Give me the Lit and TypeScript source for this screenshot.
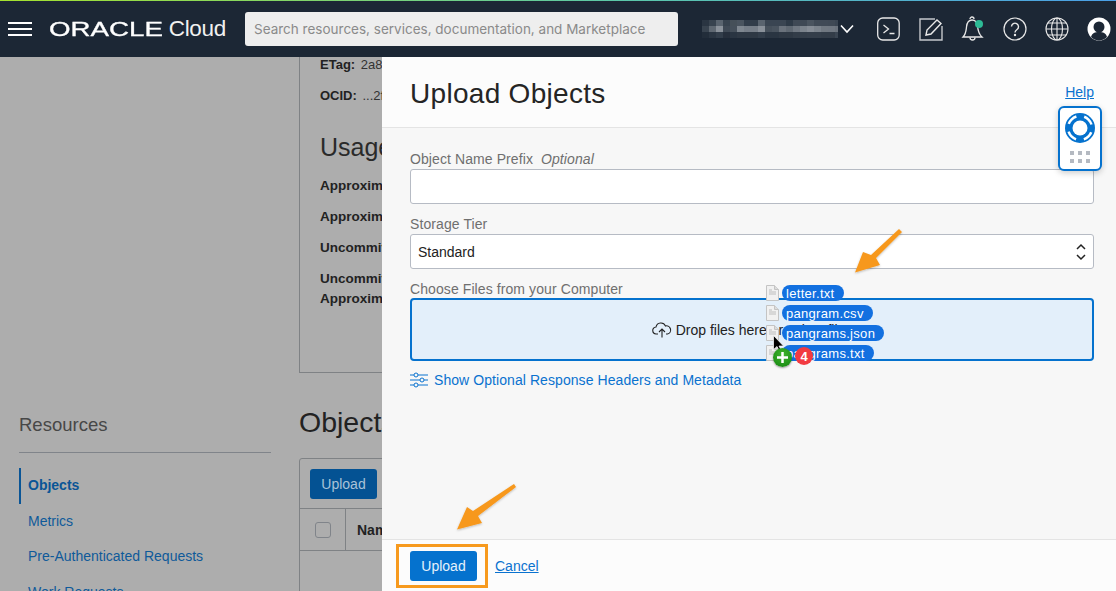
import { LitElement, html, css, svg } from 'lit';
import { customElement } from 'lit/decorators.js';

const MOSAIC = [
  ['#2a3542', '#38434f', '#5a646f', '#38434f', '#465059', '#4a545f', '#323d4a', '#323d4a', '#5a646f', '#3a4552', '#3a4552', '#3a4552', '#2e3a47', '#3f4955', '#3f4955', '#4a545f', '#404a56', '#404a56', '#3f4955', '#3a4552'],
  ['#38434f', '#5f6872', '#8a919a', '#3f4955', '#46505b', '#7f8790', '#767e88', '#767e88', '#8a919a', '#46505b', '#4a545f', '#6a727c', '#5f6872', '#6f7781', '#7b838c', '#858c95', '#7b838c', '#707881', '#6f7781', '#6a727c'],
  ['#222d3a', '#2a3542', '#323d4a', '#262f3c', '#2a3542', '#2e3844', '#2e3844', '#2e3844', '#323d4a', '#2a3542', '#2a3542', '#2e3844', '#2e3844', '#323c48', '#333d49', '#343e4a', '#343e4a', '#323c48', '#323c48', '#3a4552'],
];

const FILES = ['letter.txt', 'pangram.csv', 'pangrams.json', 'pangrams.txt'];
const NAV = ['Metrics', 'Pre-Authenticated Requests', 'Work Requests'];

@customElement('app-root')
export class AppRoot extends LitElement {
  static styles = css`
    :host {
      display: block;
      position: relative;
      width: 1116px;
      height: 591px;
      overflow: hidden;
      font-family: "Liberation Sans", Arial, sans-serif;
      color: #222;
    }
    a { text-decoration: none; }
    svg { display: block; flex: none; }

    /* top bar */
    .topbar {
      height: 57px;
      box-sizing: border-box;
      border-top: 1px solid;
      border-image: linear-gradient(90deg, #a6e22e, #5cc8a8 55%, #4a9fe8) 1;
      background: #1c2735;
      display: flex;
      align-items: center;
      color: #fff;
    }
    .burger { margin-left: 8px; }
    .logo { display: flex; align-items: center; margin-left: 17px; width: 177px; }
    .wordmark {
      font-weight: 400;
      font-size: 19.5px;
      line-height: 22px;
      transform: scaleX(1.42);
      transform-origin: left center;
      width: 121px;
      -webkit-text-stroke: 0.3px #fff;
    }
    .cloud { font-size: 22.5px; font-weight: 400; color: #f0f0f0; letter-spacing: -0.3px; }
    .search {
      margin-left: 19px;
      width: 433px;
      height: 34px;
      box-sizing: border-box;
      background: #eeeeee;
      border-radius: 3px;
      padding: 1px 32px 0 9px;
      font-family: Inter, sans-serif;
      font-size: 13.5px;
      line-height: 33px;
      color: #8a8a8a;
      white-space: nowrap;
      overflow: hidden;
    }
    .tenant { display: flex; align-items: center; margin-left: 24px; }
    .chevron { margin-left: 1px; }
    .icons { display: flex; align-items: center; margin-left: 22px; gap: 18px; }

    /* dimmed page */
    .page {
      height: 534px;
      background: #adadad;
      display: flex;
      overflow: hidden;
    }
    .side { width: 252px; margin-left: 19px; padding-top: 358px; flex: none; }
    .side h3 {
      margin: 0;
      height: 37px;
      font-size: 18.5px;
      font-weight: 400;
      line-height: 20px;
      color: #474747;
      border-bottom: 1px solid #80848a;
    }
    .side ul { list-style: none; margin: 15px 0 0; padding: 0; }
    .side li {
      height: 35.5px;
      line-height: 35.5px;
      padding-left: 9px;
      font-size: 14px;
      color: #0f5a9a;
      white-space: nowrap;
    }
    .side li.active { font-weight: 700; border-left: 2px solid #0a5596; padding-left: 7px; color: #0a5596; }
    .main { margin-left: 28px; width: 500px; flex: none; }
    .card {
      height: 316px;
      box-sizing: border-box;
      border-left: 1px solid #7f8285;
      border-bottom: 1px solid #7f8285;
      padding: 0 0 0 20px;
      font-size: 13px;
      overflow: hidden;
    }
    .card p { margin: 0; height: 31px; line-height: 16px; white-space: nowrap; font-size: 13.5px; }
    .card p.meta { color: #333; font-size: 13px; }
    .card b { color: #222; }
    .val { margin-left: 2px; }
    .card h2 {
      margin: 12px 0 15px;
      font-size: 25px;
      font-weight: 400;
      line-height: 32px;
      color: #2a2a2a;
    }
    .card .tight { height: 20px; }
    .main h2.objects {
      margin: 32px 0 0;
      font-size: 28.5px;
      line-height: 34px;
      font-weight: 400;
      color: #222;
    }
    .table {
      margin-top: 19px;
      height: 200px;
      border: 1px solid #7f8285;
      border-radius: 3px 0 0 0;
    }
    .toolbar { height: 50px; box-sizing: border-box; padding: 10px; border-bottom: 1px solid #7f8285; }
    .dim-btn {
      width: 67px;
      height: 30px;
      border-radius: 3px;
      background: #045293;
      color: #a9c2d8;
      font-size: 14px;
      line-height: 30px;
      text-align: center;
    }
    .thead { height: 41px; border-bottom: 1px solid #7f8285; display: flex; align-items: center; }
    .thead .check-cell { width: 46px; height: 100%; box-sizing: border-box; border-right: 1px solid #7f8285; display: flex; align-items: center; justify-content: center; }
    .check { width: 14px; height: 14px; border: 1px solid #80848a; border-radius: 3px; }
    .thead b { margin-left: 11px; font-size: 14px; }

    /* slide-in panel */
    .panel {
      position: absolute;
      left: 382px;
      top: 57px;
      right: 0;
      bottom: 0;
      background: #f7f7f7;
      display: flex;
      flex-direction: column;
    }
    .panel-head {
      height: 71px;
      box-sizing: border-box;
      background: #fcfcfc;
      border-bottom: 1px solid #e4e4e4;
      padding: 0 22px 0 28px;
      display: flex;
      justify-content: space-between;
    }
    .panel-head h1 {
      margin: 20px 0 0;
      font-size: 28px;
      line-height: 34px;
      font-weight: 400;
      letter-spacing: 0.3px;
      color: #252525;
    }
    .link { color: #0a72cf; text-decoration: underline; font-size: 14px; }
    .panel-head .link { margin-top: 27px; line-height: 16px; }
    .panel-body { flex: 1; padding: 24px 22px 0 28px; }
    .label {
      font-size: 14px;
      line-height: 14px;
      letter-spacing: 0.09px;
      color: #6f6f6f;
      height: 17px;
      white-space: nowrap;
    }
    .label i { margin-left: 4px; }
    .field {
      height: 35px;
      box-sizing: border-box;
      background: #fff;
      border: 1px solid #b6bbc4;
      border-radius: 3px;
      margin-bottom: 13px;
      padding: 0 7px;
      font-size: 14px;
      line-height: 34px;
      color: #222;
      display: flex;
      justify-content: space-between;
      align-items: center;
    }
    .drop {
      height: 63px;
      box-sizing: border-box;
      margin-top: -1px;
      border: 2px solid #0572ce;
      border-radius: 4px;
      background: #e3effa;
      display: flex;
      align-items: center;
      justify-content: center;
      gap: 4px;
      font-size: 14px;
      color: #222;
    }
    .options { display: flex; align-items: center; gap: 6px; margin-top: 10px; font-size: 14px; letter-spacing: 0.07px; color: #0a72cf; line-height: 18px; }
    .panel-foot {
      height: 52px;
      box-sizing: border-box;
      background: #fcfcfc;
      border-top: 1px solid #e4e4e4;
      padding: 11px 0 0 28px;
      display: flex;
      align-items: flex-start;
      gap: 18px;
    }
    .btn {
      width: 67px;
      height: 30px;
      border-radius: 3px;
      background: #0572ce;
      color: #e6f1fb;
      font-size: 14px;
      line-height: 30px;
      text-align: center;
    }
    .panel-foot .link { line-height: 30px; }

    /* help tab pinned over the panel */
    .help-tab {
      position: absolute;
      left: 1058px;
      top: 106px;
      width: 44px;
      height: 65px;
      box-sizing: border-box;
      border: 2px solid #0572ce;
      border-radius: 6px;
      background: #fff;
      box-shadow: 0 2px 6px rgba(0, 0, 0, 0.2);
      display: flex;
      flex-direction: column;
      align-items: center;
      padding-top: 5px;
    }
    .grip { display: grid; grid-template-columns: repeat(3, 4px); gap: 4px; margin-top: 8px; }
    .grip span { width: 4px; height: 4px; background: #b4b9c1; }

    /* files being dragged */
    .ghost {
      position: absolute;
      left: 766px;
      top: 285px;
      display: flex;
      flex-direction: column;
      gap: 4px;
    }
    .ghost-row { display: flex; align-items: center; gap: 3px; height: 16px; }
    .pill {
      height: 16px;
      border-radius: 8px;
      background: #1270e0;
      color: #fff;
      font-size: 13px;
      line-height: 17px;
      padding: 0 9px 0 4px;
      letter-spacing: 0.3px;
    }
    .badge {
      position: absolute;
      border-radius: 50%;
      color: #fff;
      font-weight: 700;
      display: flex;
      align-items: center;
      justify-content: center;
    }
    .plus {
      left: 773px;
      top: 348px;
      width: 19px;
      height: 19px;
      background: radial-gradient(circle at 50% 35%, #3fb52e, #13830f);
      box-shadow: 0 1px 2px rgba(0, 0, 0, 0.4);
    }
    .count {
      left: 795px;
      top: 347px;
      width: 18px;
      height: 18px;
      background: #f23a41;
      font-size: 13px;
    }
    .pointer { position: absolute; left: 773px; top: 335px; }

    /* annotations drawn on the screenshot */
    .marks { position: absolute; left: 0; top: 0; pointer-events: none; }
    .callout {
      position: absolute;
      left: 396px;
      top: 544px;
      width: 92px;
      height: 44px;
      box-sizing: border-box;
      border: 3px solid #f79a1e;
    }
  `;

  private mosaic() {
    return html`<svg width="136" height="18" shape-rendering="crispEdges">
      ${MOSAIC.map((row, r) => row.map((fill, c) =>
        svg`<rect x=${c * 7} y=${r * 6} width="7" height="6" fill=${fill}></rect>`))}
    </svg>`;
  }

  private topIcons() {
    return html`
      <svg width="24" height="24" viewBox="0 0 24 24" fill="none" stroke="#e8e8e8" stroke-width="1.3">
        <rect x="0.700" y="1" width="21.500" height="22" rx="5"></rect>
        <path d="M6.500 8l5 4-5 4M12.500 16.500h5"></path>
      </svg>
      <svg width="24" height="24" viewBox="0 0 24 24" fill="none" stroke="#e8e8e8" stroke-width="1.4">
        <path d="M16 2H1v21h22V9" stroke="#c4c7cb"></path>
        <path d="M7 18l1-5L18 3l4 3.500L12 17z"></path>
      </svg>
      <svg width="24" height="26" viewBox="0 0 24 26" fill="none" stroke="#e8e8e8" stroke-width="1.3">
        <path d="M2 21c3-3 3-6 3.500-10C6 6 8.500 4 11 4c3 0 5 2 5.500 6 .5 5 1 8 4.500 11z"></path>
        <path d="M9 3a2 2 0 0 1 4 0M9 21.500a2.500 2.500 0 0 0 5 0"></path>
        <circle cx="18" cy="8" r="4" fill="#2dbb96" stroke="none"></circle>
      </svg>
      <svg width="24" height="24" viewBox="0 0 24 24" fill="none" stroke="#e8e8e8" stroke-width="1.2">
        <circle cx="12" cy="12" r="11"></circle>
        <path d="M8.500 9.500a3.500 3.500 0 1 1 5.500 3c-1.500 1-2 1.500-2 3" stroke-width="1.4"></path>
        <circle cx="12" cy="18" r="0.6" fill="#e8e8e8"></circle>
      </svg>
      <svg width="24" height="24" viewBox="0 0 24 24" fill="none" stroke="#e8e8e8" stroke-width="1.1">
        <circle cx="12" cy="12" r="11"></circle>
        <ellipse cx="12" cy="12" rx="5.500" ry="11"></ellipse>
        <path d="M12 1v22M1 12h22M3 6h18M3 18h18"></path>
      </svg>
      <svg width="24" height="24" viewBox="0 0 24 24">
        <circle cx="12" cy="12" r="11.500" fill="#fff"></circle>
        <circle cx="12" cy="10" r="5.500" fill="#1c2735"></circle>
        <path d="M4 20c1-4 4-5 8-5s7 1 8 5a11 11 0 0 1-16 0z" fill="#1c2735"></path>
      </svg>`;
  }

  private fileIcon() {
    return html`<svg width="13" height="16" viewBox="0 0 13 16">
      <path d="M.5.500h8l4 4v11H.5z" fill="#f1f1f1" stroke="#c4c4c4"></path>
      <path d="M8.500.500v4h4" fill="#dcdcdc" stroke="#c4c4c4"></path>
      <path d="M3 5h3M3 7h7M3 9h7" stroke="#bdbdbd"></path>
    </svg>`;
  }

  render() {
    return html`
      <div class="topbar">
        <svg class="burger" width="24" height="16" viewBox="0 0 24 16" fill="#fff">
          <rect y="1" width="24" height="2"></rect>
          <rect y="7" width="24" height="2"></rect>
          <rect y="13" width="24" height="2"></rect>
        </svg>
        <div class="logo">
          <span class="wordmark">ORACLE</span>
          <span class="cloud">Cloud</span>
        </div>
        <div class="search">Search resources, services, documentation, and Marketplace</div>
        <div class="tenant">
          ${this.mosaic()}
          <svg class="chevron" width="16" height="10" viewBox="0 0 16 10" fill="none" stroke="#fff" stroke-width="1.6">
            <path d="M2 1.500l6 6.500 6-6.500"></path>
          </svg>
        </div>
        <div class="icons">${this.topIcons()}</div>
      </div>

      <div class="page">
        <div class="side">
          <h3>Resources</h3>
          <ul>
            <li class="active">Objects</li>
            ${NAV.map((item) => html`<li>${item}</li>`)}
          </ul>
        </div>
        <div class="main">
          <div class="card">
            <p class="meta"><b>ETag:</b> <span class="val">2a8f</span></p>
            <p class="meta"><b>OCID:</b> <span class="val">...2f1a</span></p>
            <h2>Usage</h2>
            <p><b>Approximate Count</b></p>
            <p><b>Approximate Size</b></p>
            <p><b>Uncommitted Parts</b></p>
            <p class="tight"><b>Uncommitted Multipart</b></p>
            <p><b>Approximate Size</b></p>
          </div>
          <h2 class="objects">Objects</h2>
          <div class="table">
            <div class="toolbar"><div class="dim-btn">Upload</div></div>
            <div class="thead">
              <div class="check-cell"><div class="check"></div></div>
              <b>Name</b>
            </div>
          </div>
        </div>
      </div>

      <div class="panel">
        <div class="panel-head">
          <h1>Upload Objects</h1>
          <a class="link">Help</a>
        </div>
        <div class="panel-body">
          <div class="label">Object Name Prefix <i>Optional</i></div>
          <div class="field"></div>
          <div class="label">Storage Tier</div>
          <div class="field">
            <span>Standard</span>
            <svg width="10" height="18" viewBox="0 0 10 18" fill="none" stroke="#222" stroke-width="1.5">
              <path d="M1 6l4-4 4 4M1 12l4 4 4-4"></path>
            </svg>
          </div>
          <div class="label">Choose Files from your Computer</div>
          <div class="drop">
            <svg width="20" height="16" viewBox="0 0 20 16" fill="none" stroke="#222" stroke-width="1.1">
              <path d="M6 12H4.500a3.500 3.500 0 0 1-.5-7 5 5 0 0 1 9.500-1 4 4 0 0 1 2 8H14"></path>
              <path d="M10 15.500V7.500M7 10l3-3 3 3"></path>
            </svg>
            <span>Drop files here or select files</span>
          </div>
          <div class="options">
            <svg width="18" height="18" viewBox="0 0 18 18" fill="none" stroke="#0a72cf" stroke-width="1">
              <path d="M0 4h4M8 4h10M0 9h10M14 9h4M0 14h4M8 14h10"></path>
              <circle cx="6" cy="4" r="2"></circle>
              <circle cx="12" cy="9" r="2"></circle>
              <circle cx="6" cy="14" r="2"></circle>
            </svg>
            <span>Show Optional Response Headers and Metadata</span>
          </div>
        </div>
        <div class="panel-foot">
          <div class="btn">Upload</div>
          <a class="link">Cancel</a>
        </div>
      </div>

      <div class="help-tab">
        <svg width="30" height="30" viewBox="0 0 30 30" fill="none">
          <circle cx="15" cy="15" r="15" fill="#0572ce"></circle>
          <circle cx="15" cy="15" r="12" stroke="#fff" stroke-width="2.5" stroke-dasharray="11 7.850" stroke-dashoffset="5.500" transform="rotate(45 15 15)"></circle>
          <circle cx="15" cy="15" r="7.500" fill="#fff"></circle>
        </svg>
        <div class="grip">${[0, 1, 2, 3, 4, 5].map(() => html`<span></span>`)}</div>
      </div>

      <div class="ghost">
        ${FILES.map((name) => html`
          <div class="ghost-row">${this.fileIcon()}<span class="pill">${name}</span></div>
        `)}
      </div>
      <svg class="pointer" width="12" height="18" viewBox="0 0 12 18">
        <path d="M.5.500v14l3.500-3 2.500 5 2-1-2.500-4.500h4.500z" fill="#000" stroke="#fff" stroke-width="0.7"></path>
      </svg>
      <div class="badge plus">
        <svg width="11" height="11" viewBox="0 0 11 11" stroke="#fff" stroke-width="2.500"><path d="M5.500 0v11M0 5.500h11"></path></svg>
      </div>
      <div class="badge count">4</div>

      <svg class="marks" width="1116" height="591" viewBox="0 0 1116 591">
        <defs>
          <filter id="soft" x="-20%" y="-20%" width="140%" height="140%">
            <feDropShadow dx="0" dy="1" stdDeviation="1" flood-color="#000" flood-opacity="0.25"></feDropShadow>
          </filter>
        </defs>
        <g fill="#f7981d" filter="url(#soft)">
          <polygon points="899,229 902,232 876,258 880,265 855,272.600 863,252 871,255"></polygon>
          <polygon points="514,484 516,487 478,516 482,523 457,529.500 467,507 473,511"></polygon>
        </g>
      </svg>
      <div class="callout"></div>
    `;
  }
}
